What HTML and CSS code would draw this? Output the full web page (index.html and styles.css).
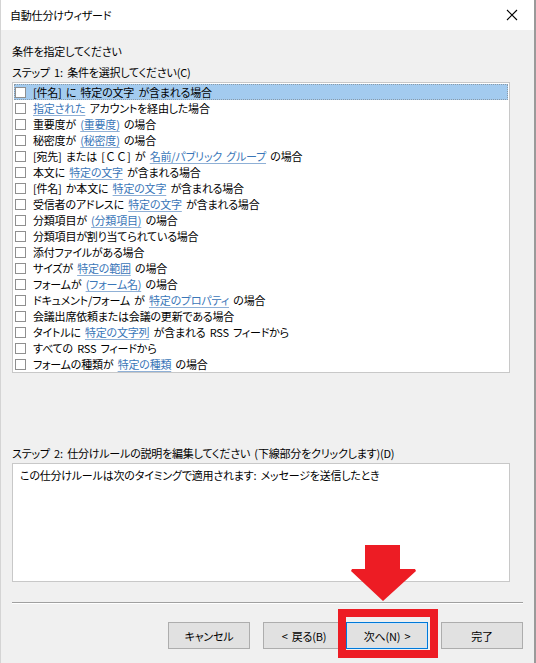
FILE: index.html
```html
<!DOCTYPE html>
<html lang="ja">
<head>
<meta charset="utf-8">
<title>自動仕分けウィザード</title>
<link rel="stylesheet" href="styles.css">
</head>
<body>
<div class="window">
  <div class="titlebar">
    <span class="title">自動仕分けウィザード</span>
    <svg class="close" width="12" height="12" viewBox="0 0 12 12"><path d="M1 1 L11 11 M11 1 L1 11" stroke="#000" stroke-width="1.1" fill="none"/></svg>
  </div>
  <div class="content">
    <div class="label first">条件を指定してください</div>
    <div class="label">ステップ 1: 条件を選択してください(C)</div>
    <div class="listbox">
      <div class="row selected"><span class="cb"></span><span class="txt">[件名] に 特定の文字 が含まれる場合</span></div>
      <div class="row"><span class="cb"></span><span class="txt"><span class="link">指定された</span> アカウントを経由した場合</span></div>
      <div class="row"><span class="cb"></span><span class="txt">重要度が <span class="link">(重要度)</span> の場合</span></div>
      <div class="row"><span class="cb"></span><span class="txt">秘密度が <span class="link">(秘密度)</span> の場合</span></div>
      <div class="row"><span class="cb"></span><span class="txt">[宛先] または <span class="fw">[ＣＣ]</span> が <span class="link">名前/パブリック グループ</span> の場合</span></div>
      <div class="row"><span class="cb"></span><span class="txt">本文に <span class="link">特定の文字</span> が含まれる場合</span></div>
      <div class="row"><span class="cb"></span><span class="txt">[件名] か本文に <span class="link">特定の文字</span> が含まれる場合</span></div>
      <div class="row"><span class="cb"></span><span class="txt">受信者のアドレスに <span class="link">特定の文字</span> が含まれる場合</span></div>
      <div class="row"><span class="cb"></span><span class="txt">分類項目が <span class="link">(分類項目)</span> の場合</span></div>
      <div class="row"><span class="cb"></span><span class="txt">分類項目が割り当てられている場合</span></div>
      <div class="row"><span class="cb"></span><span class="txt">添付ファイルがある場合</span></div>
      <div class="row"><span class="cb"></span><span class="txt">サイズが <span class="link">特定の範囲</span> の場合</span></div>
      <div class="row"><span class="cb"></span><span class="txt">フォームが <span class="link">(フォーム名)</span> の場合</span></div>
      <div class="row"><span class="cb"></span><span class="txt">ドキュメント/フォーム が <span class="link">特定のプロパティ</span> の場合</span></div>
      <div class="row"><span class="cb"></span><span class="txt">会議出席依頼または会議の更新である場合</span></div>
      <div class="row"><span class="cb"></span><span class="txt">タイトルに <span class="link">特定の文字列</span> が含まれる RSS フィードから</span></div>
      <div class="row"><span class="cb"></span><span class="txt">すべての RSS フィードから</span></div>
      <div class="row"><span class="cb"></span><span class="txt">フォームの種類が <span class="link">特定の種類</span> の場合</span></div>
    </div>
    <div class="label step2">ステップ 2: 仕分けルールの説明を編集してください (下線部分をクリックします)(D)</div>
    <div class="textbox">この仕分けルールは次のタイミングで適用されます: メッセージを送信したとき</div>
  </div>
  <div class="separator"></div>
  <div class="buttons">
    <div class="btn">キャンセル</div>
    <div class="btn back">&lt; 戻る(B)</div>
    <div class="btn next">次へ(N) &gt;</div>
    <div class="btn finish">完了</div>
  </div>
  <svg class="arrow" width="66" height="57" viewBox="0 0 66 57"><polygon points="14,0 49,0 49,24 64,24 65,26 32,56 0,26 1,24 14,24" fill="#ed1c24"/></svg>
  <div class="highlight"></div>
</div>
</body>
</html>
```
FILE: styles.css
```css
* { box-sizing: border-box; }
html, body { margin: 0; padding: 0; }
body {
  background: #9a9a9a;
  width: 536px;
  height: 663px;
  overflow: hidden;
  font-family: "Noto Sans CJK JP", "Noto Sans", sans-serif;
  font-size: 11px;
  letter-spacing: -0.2px;
  word-spacing: 2px;
  font-feature-settings: "palt";
  color: #000;
}
.window {
  position: relative;
  width: 534px;
  height: 663px;
  background: #f0f0f0;
  border-left: 1px solid #d4d4d4;
}
.titlebar {
  height: 30px;
  background: #fff;
  display: flex;
  align-items: center;
  justify-content: space-between;
  padding: 0 16px 0 9px;
}
.title { font-size: 11px; line-height: 16px; }
.close { display: block; }
.content {
  padding: 13px 24px 0 11px;
}
.label { line-height: 16px; height: 16px; white-space: nowrap; }
.label + .label { margin-top: 5px; }
.listbox {
  margin-top: 2px;
  height: 291px;
  background: #fff;
  border: 1px solid #c8c8c8;
  padding: 1px 1px 0 1px;
}
.row {
  height: 16px;
  display: flex;
  align-items: center;
  white-space: nowrap;
}
.row.selected {
  background: #a3cbef;
  outline: 1px dotted #8a9aa8;
  outline-offset: -1px;
}
.cb {
  width: 11px;
  height: 11px;
  border: 1px solid #8f8f8f;
  background: #fff;
  margin-left: 1px;
  flex: none;
}
.txt { margin-left: 7px; line-height: 16px; }
.fw { font-feature-settings: normal; letter-spacing: 0; }
.link {
  color: #3a76b8;
  text-decoration: underline;
  text-decoration-color: #8fb0d6;
  text-underline-offset: 2px;
}
.step2 { margin-top: 72px; }
.textbox {
  margin-top: 2px;
  height: 119px;
  background: #fff;
  border: 1px solid #c8c8c8;
  padding: 3px 7px;
  line-height: 16px;
  white-space: nowrap;
}
.separator {
  margin: 20px 11px 0 11px;
  height: 2px;
  border-top: 1px solid #a0a0a0;
  border-bottom: 1px solid #fff;
}
.buttons {
  display: flex;
  justify-content: flex-end;
  padding: 18px 11px 0 0;
}
.btn {
  width: 82px;
  height: 27px;
  background: #e1e1e1;
  border: 1px solid #adadad;
  display: flex;
  align-items: center;
  justify-content: center;
  font-size: 11px;
}
.btn.back { margin-left: 13px; }
.btn.next {
  margin-left: 1px;
  border: 1px solid #0078d7;
  box-shadow: inset 0 0 0 1px #cfe4f7;
}
.btn.finish { margin-left: 13px; }
.arrow {
  position: absolute;
  left: 350px;
  top: 545px;
}
.highlight {
  position: absolute;
  left: 337px;
  top: 609px;
  width: 100px;
  height: 49px;
  border: 8px solid #ed1c24;
}
```
